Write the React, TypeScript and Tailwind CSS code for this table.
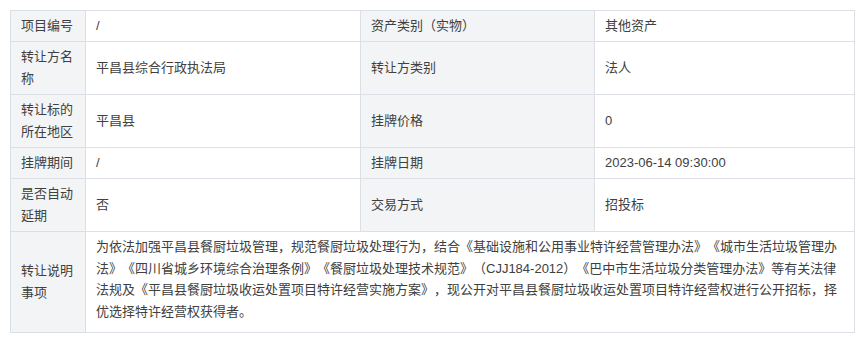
const rows: [string, string, string, string][] = [
  ["项目编号", "/", "资产类别（实物）", "其他资产"],
  ["转让方名称", "平昌县综合行政执法局", "转让方类别", "法人"],
  ["转让标的所在地区", "平昌县", "挂牌价格", "0"],
  ["挂牌期间", "/", "挂牌日期", "2023-06-14 09:30:00"],
  ["是否自动延期", "否", "交易方式", "招投标"],
];

const note =
  "为依法加强平昌县餐厨垃圾管理，规范餐厨垃圾处理行为，结合《基础设施和公用事业特许经营管理办法》《城市生活垃圾管理办法》《四川省城乡环境综合治理条例》《餐厨垃圾处理技术规范》（CJJ184-2012）《巴中市生活垃圾分类管理办法》等有关法律法规及《平昌县餐厨垃圾收运处置项目特许经营实施方案》，现公开对平昌县餐厨垃圾收运处置项目特许经营权进行公开招标，择优选择特许经营权获得者。";

const label = "flex items-center px-[10px] py-[4px] bg-[#f3f4f6] border-r border-b border-[#dcdfe6]";
const value = "flex items-center px-[10px] py-[4px] bg-white border-r border-b border-[#dcdfe6]";

export default function App() {
  return (
    <div
      lang="zh-CN"
      className="w-[865px] h-[341px] bg-white pt-[10px] pl-[10px] text-[13px] leading-[22px] text-[#404040] [text-spacing-trim:space-all]"
      style={{ fontFamily: '"Liberation Sans", "Noto Sans CJK SC", sans-serif' }}
    >
      <div className="grid grid-cols-[75px_275px_234px_260px] w-[845px] border-l border-t border-[#dcdfe6]">
        {rows.map((r, i) => (
          <div key={i} className="contents">
            <div className={label}>{r[0]}</div>
            <div className={value}>{r[1]}</div>
            <div className={label}>{r[2]}</div>
            <div className={value}>{r[3]}</div>
          </div>
        ))}
        <div className={label}>转让说明事项</div>
        <div className="col-span-3 px-[10px] pt-[4px] pb-[10px] leading-[21.5px] bg-white border-r border-b border-[#dcdfe6]">
          {note}
        </div>
      </div>
    </div>
  );
}
